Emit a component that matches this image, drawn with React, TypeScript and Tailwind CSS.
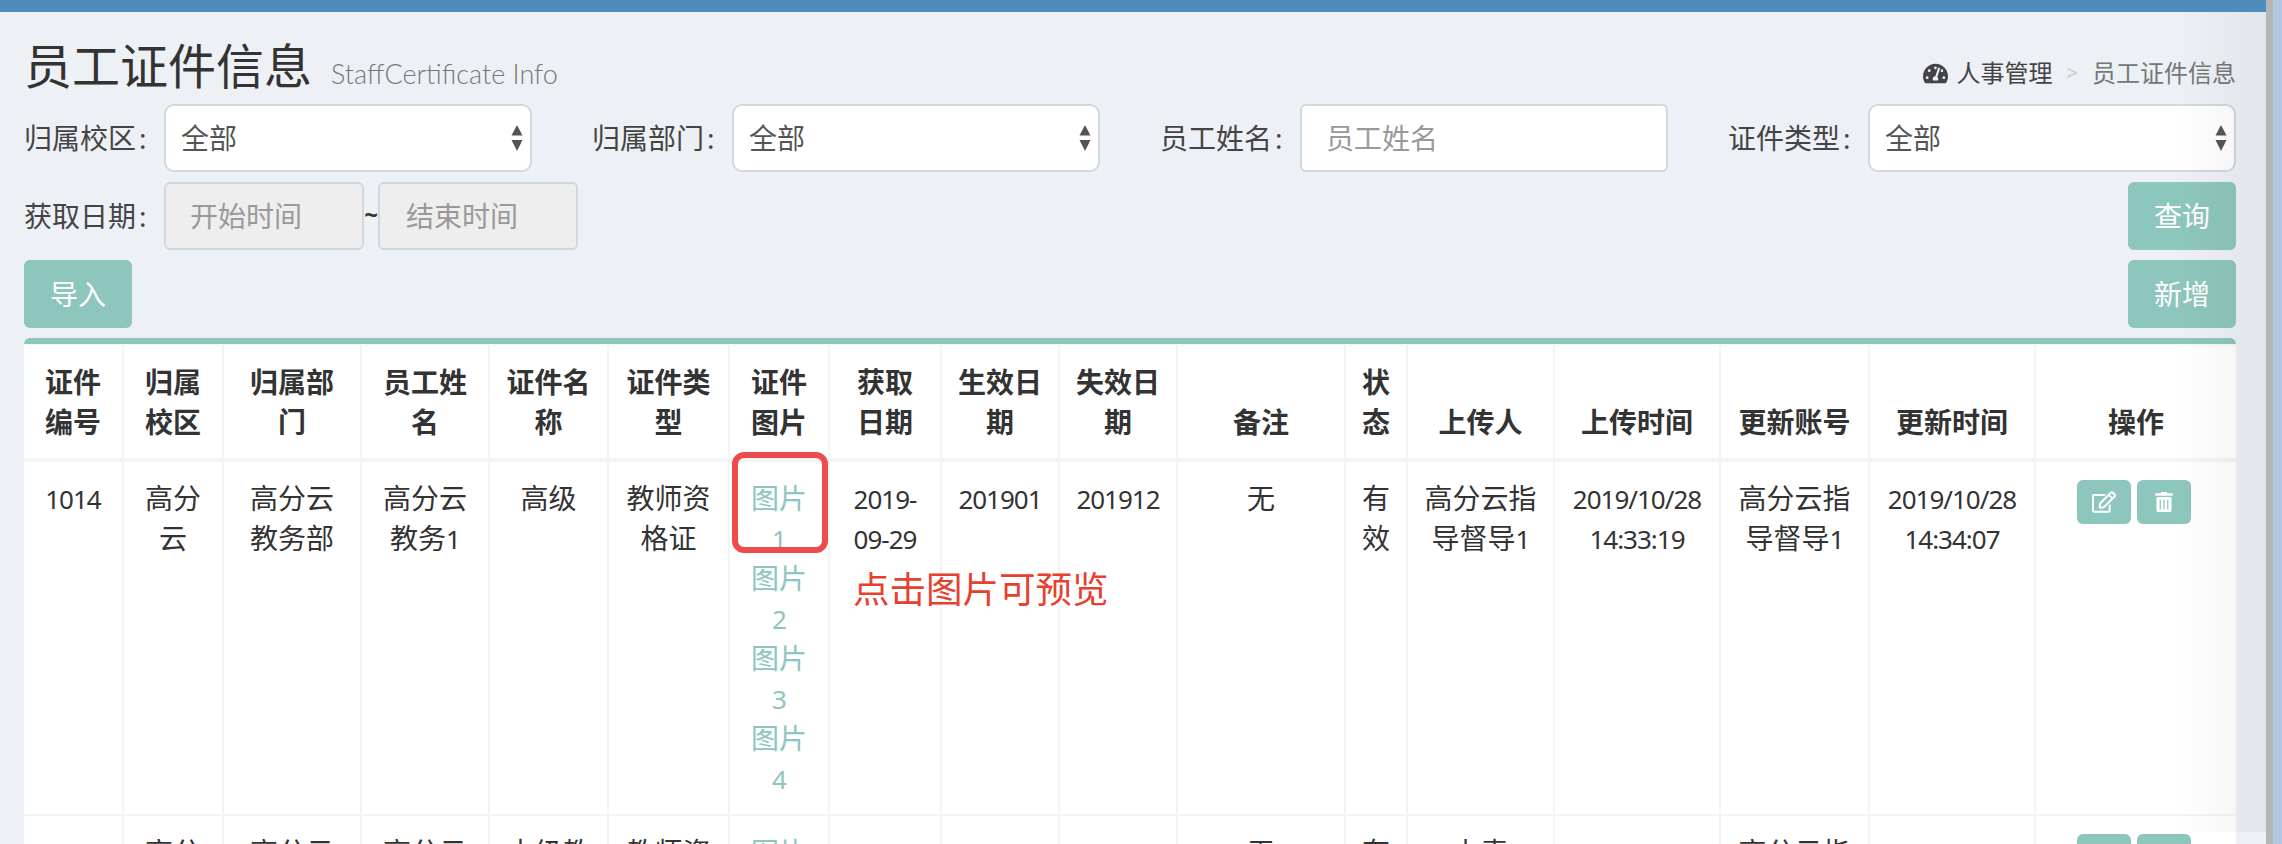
import { ReactNode } from 'react'
import { FaRegEdit, FaTachometerAlt, FaTrashAlt } from 'react-icons/fa'

const columns = [
	{ title: '证件编号', w: 'w-[100px]' },
	{ title: '归属校区', w: 'w-[100px]' },
	{ title: '归属部门', w: 'w-[138px]' },
	{ title: '员工姓名', w: 'w-[128px]' },
	{ title: '证件名称', w: 'w-[119px]' },
	{ title: '证件类型', w: 'w-[121px]' },
	{ title: '证件图片', w: 'w-[100px]' },
	{ title: '获取日期', w: 'w-[112px]' },
	{ title: '生效日期', w: 'w-[118px]' },
	{ title: '失效日期', w: 'w-[118px]' },
	{ title: '备注', w: 'w-[168px]' },
	{ title: '状态', w: 'w-[62px]' },
	{ title: '上传人', w: 'w-[147px]' },
	{ title: '上传时间', w: 'w-[166px]' },
	{ title: '更新账号', w: 'w-[149px]' },
	{ title: '更新时间', w: 'w-[166px]' },
	{ title: '操作', w: 'w-[200px]' }
]

const Num = ({ children }: { children: ReactNode }) => (
	<span className="font-['Noto_Sans'] text-[26px] leading-none tracking-[-1px]">
		{children}
	</span>
)

const Label = ({ children }: { children: ReactNode }) => (
	<span className="w-[140px] shrink-0 text-[#444]">
		{children}
		<span className="ml-[3px]">:</span>
	</span>
)

const SelectBox = () => (
	<div className="relative flex-1">
		<select className="h-[68px] w-full appearance-none rounded-[10px] border-2 border-[#d2d6de] bg-white pl-[15px] text-[#555]">
			<option>全部</option>
		</select>
		<svg
			className="absolute right-[8px] top-[21px]"
			width="14"
			height="26"
			viewBox="0 0 14 26"
			fill="#555"
		>
			<path d="M7 0l5.500 10.500h-11z" />
			<path d="M7 26l5.500-11h-11z" />
		</svg>
	</div>
)

const Btn = ({ children }: { children: ReactNode }) => (
	<button
		type="button"
		className="h-[68px] w-[108px] rounded-md bg-[#8dc6bc] text-white"
	>
		{children}
	</button>
)

const Td = ({ children }: { children: ReactNode }) => (
	<td className="border-b-2 border-r-2 border-[#f4f4f4] px-4 py-4 text-center align-top text-[#333] last:border-r-0">
		{children}
	</td>
)

const PhotoLinks = () => (
	<>
		{[1, 2, 3, 4].map((n) => (
			<a key={n} className="block text-[#8dc6bc]">
				图片 <Num>{n}</Num>
			</a>
		))}
	</>
)

const Actions = () => (
	<div className="mt-[2px] flex justify-center gap-1.5 pr-1">
		<button
			type="button"
			className="flex h-[44px] w-[54px] items-center justify-center rounded-md bg-[#8dc6bc] text-white"
		>
			<FaRegEdit size={24} />
		</button>
		<button
			type="button"
			className="flex h-[44px] w-[54px] items-center justify-center rounded-md bg-[#8dc6bc] text-white"
		>
			<FaTrashAlt size={20} />
		</button>
	</div>
)

const Row = ({ name, uploader }: { name: string; uploader: ReactNode }) => (
	<tr>
		<Td>
			<Num>1014</Num>
		</Td>
		<Td>高分云</Td>
		<Td>高分云教务部</Td>
		<Td>
			高分云教务<Num>1</Num>
		</Td>
		<Td>{name}</Td>
		<Td>教师资格证</Td>
		<Td>
			<PhotoLinks />
		</Td>
		<Td>
			<Num>
				2019-
				<br />
				09-29
			</Num>
		</Td>
		<Td>
			<Num>201901</Num>
		</Td>
		<Td>
			<Num>201912</Num>
		</Td>
		<Td>无</Td>
		<Td>有效</Td>
		<Td>{uploader}</Td>
		<Td>
			<Num>
				2019/10/28
				<br />
				14:33:19
			</Num>
		</Td>
		<Td>
			高分云指导督导<Num>1</Num>
		</Td>
		<Td>
			<Num>
				2019/10/28
				<br />
				14:34:07
			</Num>
		</Td>
		<Td>
			<Actions />
		</Td>
	</tr>
)

export default function App() {
	return (
		<div className="flex h-[844px] overflow-hidden bg-[#b0c8e0] font-['Noto_Sans','Noto_Sans_CJK_SC',sans-serif] text-[28px] leading-[40px]">
			<div className="relative w-[2266px] shrink-0 bg-[#edf0f5]">
				<div className="h-3 bg-[#4f8cb9]" />

				<div className="flex flex-col gap-2.5 pl-6 pr-[30px]">
					{/* Header */}
					<div className="-mb-2.5 flex h-[92px] items-start justify-between pt-[28px]">
						<div className="flex items-baseline">
							<h1 className="text-[48px] leading-[52px] text-[#333]">
								员工证件信息
							</h1>
							<span className="ml-[19px] font-['Lato'] text-[27px] font-light text-[#777]">
								StaffCertificate Info
							</span>
						</div>
						<div className="mt-[13px] flex items-center text-[24px] leading-[40px] text-[#444]">
							<FaTachometerAlt size={25} className="mr-[9px]" />
							<span>人事管理</span>
							<span className="mx-[14px] text-[20px] text-[#ccc]">&gt;</span>
							<span className="text-[#777]">员工证件信息</span>
						</div>
					</div>

					{/* Filters */}
					<div className="grid grid-cols-4 gap-x-[60px]">
						<div className="flex items-center">
							<Label>归属校区</Label>
							<SelectBox />
						</div>
						<div className="flex items-center">
							<Label>归属部门</Label>
							<SelectBox />
						</div>
						<div className="flex items-center">
							<Label>员工姓名</Label>
							<input
								placeholder="员工姓名"
								className="h-[68px] min-w-0 flex-1 rounded-md border-2 border-[#d2d6de] bg-white pl-6 placeholder:text-[#999]"
							/>
						</div>
						<div className="flex items-center">
							<Label>证件类型</Label>
							<SelectBox />
						</div>
					</div>

					<div className="flex items-center justify-between">
						<div className="flex items-center">
							<Label>获取日期</Label>
							<input
								disabled
								placeholder="开始时间"
								className="h-[68px] w-[200px] rounded-md border-2 border-[#d2d6de] bg-[#eee] pl-6 placeholder:text-[#999]"
							/>
							<span className="mb-1 w-[14px] text-center text-[24px] font-bold text-[#333]">
								~
							</span>
							<input
								disabled
								placeholder="结束时间"
								className="h-[68px] w-[200px] rounded-md border-2 border-[#d2d6de] bg-[#eee] pl-[26px] placeholder:text-[#999]"
							/>
						</div>
						<Btn>查询</Btn>
					</div>

					<div className="flex items-center justify-between">
						<Btn>导入</Btn>
						<Btn>新增</Btn>
					</div>

					{/* Table */}
					<div className="rounded-t-md border-t-[6px] border-[#8dc6bc] bg-white">
						<table className="w-full table-fixed border-separate border-spacing-0">
							<colgroup>
								{columns.map((c) => (
									<col key={c.title} className={c.w} />
								))}
							</colgroup>
							<thead>
								<tr>
									{columns.map((c) => (
										<th
											key={c.title}
											className="border-b-4 border-r-2 border-t-2 border-b-[#f4f4f4] border-r-[#f4f4f4] border-t-[#f8f8f8] px-4 py-4 text-center align-bottom font-semibold text-[#333] last:border-r-0"
										>
											{c.title}
										</th>
									))}
								</tr>
							</thead>
							<tbody>
								<Row
									name="高级"
									uploader={
										<>
											高分云指导督导<Num>1</Num>
										</>
									}
								/>
								<Row name="中级教师" uploader="上责" />
							</tbody>
						</table>
					</div>
				</div>

				{/* Annotation drawn over the table */}
				<div className="pointer-events-none absolute left-[732px] top-[452px] h-[101px] w-[96px] rounded-xl border-[6px] border-[#ee4c4c]" />
				<span className="absolute left-[853px] top-[564px] text-[36.500px] leading-[50px] text-[#e8402e]">
					点击图片可预览
				</span>
				<div className="pointer-events-none absolute inset-y-3 right-0 w-[90px] bg-gradient-to-r from-transparent to-black/5" />
			</div>
			<div className="w-[7px] shrink-0 bg-[#b5b5b5]" />
		</div>
	)
}
